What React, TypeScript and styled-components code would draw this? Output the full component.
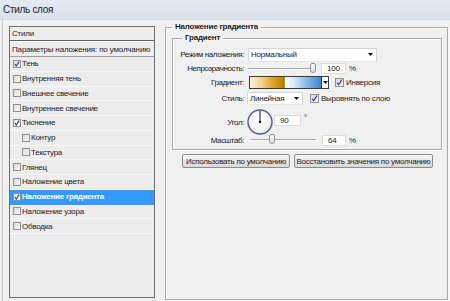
import React from "react";
import styled, { createGlobalStyle } from "styled-components";

const Global = createGlobalStyle`
  html, body { margin: 0; padding: 0; background: #f0f0f0; }
  body { font-family: "Liberation Sans", Arial, sans-serif; font-size: 8px; color: #1c1c1c; }
  * { box-sizing: border-box; }
`;

const Window = styled.div`
  width: 450px; height: 301px; display: flex; flex-direction: column;
  background: #f0f0f0; overflow: hidden;
`;

const TitleBar = styled.div`
  height: 20px; flex: none; display: flex; align-items: center; padding-left: 3px;
  background: linear-gradient(#e4eaf1, #d9e1ea);
  border-bottom: 1px solid #cdd5de;
  font-size: 10px; letter-spacing: -0.3px; color: #222;
`;

const Body = styled.div`
  flex: 1; display: flex; min-height: 0;
`;

const LeftPane = styled.div`
  width: 158px; margin-left: 2px; border-left: 1px solid #c9c9c9;
  padding: 6px 5px 3px 6px; display: flex;
`;

const StyleList = styled.div`
  flex: 1; display: flex; flex-direction: column;
  border: 1px solid #6f6f6f; background: #ececec;
`;

const ListHeader = styled.div`
  height: 14px; display: flex; align-items: center; padding-left: 2px;
  border-bottom: 1px solid #5f5f5f; letter-spacing: -0.2px;
`;

const ListParams = styled.div`
  height: 16px; display: flex; align-items: center; padding-left: 2px;
  border-top: 1px solid #fbfbfb; border-bottom: 1px solid #9d9d9d; letter-spacing: -0.15px;
`;

const ListItem = styled.div<{ $indent?: boolean; $selected?: boolean }>`
  height: 14.75px; display: flex; align-items: center; gap: 1px;
  padding-left: ${(p) => (p.$indent ? 12 : 3)}px;
  border-bottom: 1px solid ${(p) => (p.$selected ? "#3399ff" : "#f8f8f8")};
  background: ${(p) => (p.$selected ? "#3399ff" : "transparent")};
  color: ${(p) => (p.$selected ? "#ffffff" : "#1c1c1c")};
  font-weight: ${(p) => (p.$selected ? "bold" : "normal")};
  letter-spacing: -0.25px;
`;

const Box = styled.span<{ $size: number }>`
  width: ${(p) => p.$size}px; height: ${(p) => p.$size}px; flex: none;
  display: inline-flex; align-items: center; justify-content: center;
  border: 1px solid #8f8f8f;
  background: linear-gradient(135deg, #dcdcdc, #f7f7f7);
`;

const Check = ({ checked, size = 8 }: { checked?: boolean; size?: number }) => (
  <Box $size={size}>
    {checked && (
      <svg width={size - 2} height={size - 2} viewBox="0 0 8 8">
        <path d="M1.3 4.2 L3 6.6 L6.8 0.8" fill="none" stroke="#233f9a" strokeWidth="1.4" />
      </svg>
    )}
  </Box>
);

const RightPane = styled.div`
  flex: 1; display: flex; padding: 2px 2px 1px 5px;
`;

const Group = styled.fieldset`
  flex: 1; margin: 0; padding: 1px 5px 0 6px; min-width: 0;
  border: 1px solid #a9a9a9; box-shadow: inset 1px 1px 0 #fff, 1px 1px 0 #fff;
  display: flex; flex-direction: column;
`;

const GroupTitle = styled.legend<{ $offset: number }>`
  font-weight: bold; line-height: 10px; padding: 0 3px; margin-left: ${(p) => p.$offset}px;
  letter-spacing: -0.2px;
`;

const SubGroup = styled.fieldset`
  margin: 0; padding: 4px 0 3px 0; min-width: 0;
  border: 1px solid #a9a9a9; box-shadow: inset 1px 1px 0 #fff, 1px 1px 0 #fff;
  display: flex; flex-direction: column;
`;

const FormRow = styled.div<{ $h: number; $mt?: number }>`
  height: ${(p) => p.$h}px; margin-top: ${(p) => p.$mt ?? 0}px;
  display: grid; grid-template-columns: 72px 1fr; column-gap: 3px; align-items: center;
`;

const Label = styled.span`
  text-align: right; padding-right: 1px; letter-spacing: -0.4px; white-space: nowrap;
`;

const Controls = styled.div`
  display: flex; align-items: center; height: 100%;
`;

const SelectBox = styled.div<{ $w: number; $h: number; $ml?: number }>`
  width: ${(p) => p.$w}px; height: ${(p) => p.$h}px; margin-left: ${(p) => p.$ml ?? 0}px;
  display: flex; align-items: center; justify-content: space-between;
  padding: 0 3px 0 2px; background: #fff;
  border: 1px solid #d4d4d4; border-bottom-color: #e6e6e6;
  letter-spacing: -0.25px;
`;

const Arrow = () => (
  <svg width="5" height="3" viewBox="0 0 5 3">
    <path d="M0 0 H5 L2.5 3 Z" fill="#111" />
  </svg>
);

const SliderTrack = styled.div<{ $w: number; $ml?: number }>`
  position: relative; width: ${(p) => p.$w}px; height: 2px; margin-left: ${(p) => p.$ml ?? 0}px;
  border-top: 1px solid #a8a8a8; border-bottom: 1px solid #ffffff;
`;

const SliderThumb = styled.div`
  position: absolute; top: -6px; width: 6px; height: 10px; margin-left: -3px;
  border: 1px solid #8e8e8e; border-radius: 2px 2px 3px 3px;
  background: linear-gradient(#fbfbfb, #dedede);
`;

const NumInput = styled.div<{ $w: number; $ml: number; $mt?: number }>`
  width: ${(p) => p.$w}px; height: 11px; margin-left: ${(p) => p.$ml}px;
  align-self: ${(p) => (p.$mt !== undefined ? "flex-start" : "center")};
  margin-top: ${(p) => p.$mt ?? 0}px;
  display: flex; align-items: center; padding-left: 5px;
  background: #fff; border: 1px solid #dcdcdc; letter-spacing: -0.2px;
`;

const Unit = styled.span<{ $top?: boolean }>`
  margin-left: 3px; align-self: ${(p) => (p.$top ? "flex-start" : "center")};
  margin-top: ${(p) => (p.$top ? 4 : 0)}px;
`;

const GradientSwatch = styled.div`
  width: 73px; height: 13px; margin-left: 1px; border: 1px solid #3a3a3a;
  background: linear-gradient(90deg, #fbf3df 0%, #f0d48e 16%, #dca52a 32%, #bd8208 46%, #a87006 48.5%, #ffffff 49%, #d6e8f8 62%, #7fb4e6 82%, #3d86d2 100%);
`;

const SwatchButton = styled.div`
  width: 7px; height: 13px; display: flex; align-items: center; justify-content: center;
  border: 1px solid #3a3a3a; border-left: none; background: #fff;
`;

const CheckLabel = styled.label<{ $ml: number }>`
  display: flex; align-items: center; gap: 2px; margin-left: ${(p) => p.$ml}px;
  letter-spacing: -0.25px; white-space: nowrap;
`;

const Dial = () => (
  <svg width="26" height="26" viewBox="0 0 26 26">
    <defs>
      <radialGradient id="dialfill" cx="50%" cy="40%" r="60%">
        <stop offset="0%" stopColor="#ffffff" />
        <stop offset="100%" stopColor="#ececec" />
      </radialGradient>
    </defs>
    <circle cx="13" cy="13" r="12" fill="url(#dialfill)" stroke="#4f5b82" strokeWidth="1.4" />
    <line x1="13" y1="13" x2="13" y2="2" stroke="#111" strokeWidth="1" />
    <circle cx="13" cy="13" r="1.2" fill="#111" />
  </svg>
);

const DialWrap = styled.div`
  display: flex; margin-left: -1px;
`;

const ButtonRow = styled.div`
  display: flex; gap: 4px; margin-top: 4px; padding-left: 10px;
`;

const Button = styled.button<{ $w: number }>`
  width: ${(p) => p.$w}px; height: 14px; padding: 0;
  font-family: inherit; font-size: 8px; letter-spacing: -0.25px; color: #1c1c1c;
  border: 1px solid #8b8b8b; border-radius: 2px;
  background: linear-gradient(#f8f8f8, #e6e6e6 50%, #d9d9d9);
`;

const items: { name: string; checked?: boolean; indent?: boolean; selected?: boolean }[] = [
  { name: "Тень", checked: true },
  { name: "Внутренняя тень" },
  { name: "Внешнее свечение" },
  { name: "Внутреннее свечение" },
  { name: "Тиснение", checked: true },
  { name: "Контур", indent: true },
  { name: "Текстура", indent: true },
  { name: "Глянец" },
  { name: "Наложение цвета" },
  { name: "Наложение градиента", checked: true, selected: true },
  { name: "Наложение узора" },
  { name: "Обводка" },
];

export default function App() {
  return (
    <Window>
      <Global />
      <TitleBar>Стиль слоя</TitleBar>
      <Body>
        <LeftPane>
          <StyleList>
            <ListHeader>Стили</ListHeader>
            <ListParams>Параметры наложения: по умолчанию</ListParams>
            {items.map((it) => (
              <ListItem key={it.name} $indent={it.indent} $selected={it.selected}>
                <Check checked={it.checked} />
                <span>{it.name}</span>
              </ListItem>
            ))}
          </StyleList>
        </LeftPane>
        <RightPane>
          <Group>
            <GroupTitle $offset={0}>Наложение градиента</GroupTitle>
            <SubGroup>
              <GroupTitle $offset={9}>Градиент</GroupTitle>
              <FormRow $h={15}>
                <Label>Режим наложения:</Label>
                <Controls>
                  <SelectBox $w={129} $h={14}>
                    <span>Нормальный</span>
                    <Arrow />
                  </SelectBox>
                </Controls>
              </FormRow>
              <FormRow $h={13}>
                <Label>Непрозрачность:</Label>
                <Controls>
                  <SliderTrack $w={68}>
                    <SliderThumb style={{ left: "96%" }} />
                  </SliderTrack>
                  <NumInput $w={25} $ml={5}>100</NumInput>
                  <Unit>%</Unit>
                </Controls>
              </FormRow>
              <FormRow $h={14}>
                <Label>Градиент:</Label>
                <Controls>
                  <GradientSwatch />
                  <SwatchButton>
                    <Arrow />
                  </SwatchButton>
                  <CheckLabel $ml={6}>
                    <Check checked size={9} />
                    <span>Инверсия</span>
                  </CheckLabel>
                </Controls>
              </FormRow>
              <FormRow $h={14} $mt={2}>
                <Label>Стиль:</Label>
                <Controls>
                  <SelectBox $w={56} $h={13} $ml={-1}>
                    <span>Линейная</span>
                    <Arrow />
                  </SelectBox>
                  <CheckLabel $ml={7}>
                    <Check checked size={9} />
                    <span>Выровнять по слою</span>
                  </CheckLabel>
                </Controls>
              </FormRow>
              <FormRow $h={24} $mt={4}>
                <Label>Угол:</Label>
                <Controls>
                  <DialWrap>
                    <Dial />
                  </DialWrap>
                  <NumInput $w={27} $ml={1} $mt={6}>90</NumInput>
                  <Unit $top>°</Unit>
                </Controls>
              </FormRow>
              <FormRow $h={12} $mt={1}>
                <Label>Масштаб:</Label>
                <Controls>
                  <SliderTrack $w={66} $ml={2}>
                    <SliderThumb style={{ left: "34%" }} />
                  </SliderTrack>
                  <NumInput $w={24} $ml={6}>64</NumInput>
                  <Unit>%</Unit>
                </Controls>
              </FormRow>
            </SubGroup>
            <ButtonRow>
              <Button $w={108}>Использовать по умолчанию</Button>
              <Button $w={139}>Восстановить значения по умолчанию</Button>
            </ButtonRow>
          </Group>
        </RightPane>
      </Body>
    </Window>
  );
}
